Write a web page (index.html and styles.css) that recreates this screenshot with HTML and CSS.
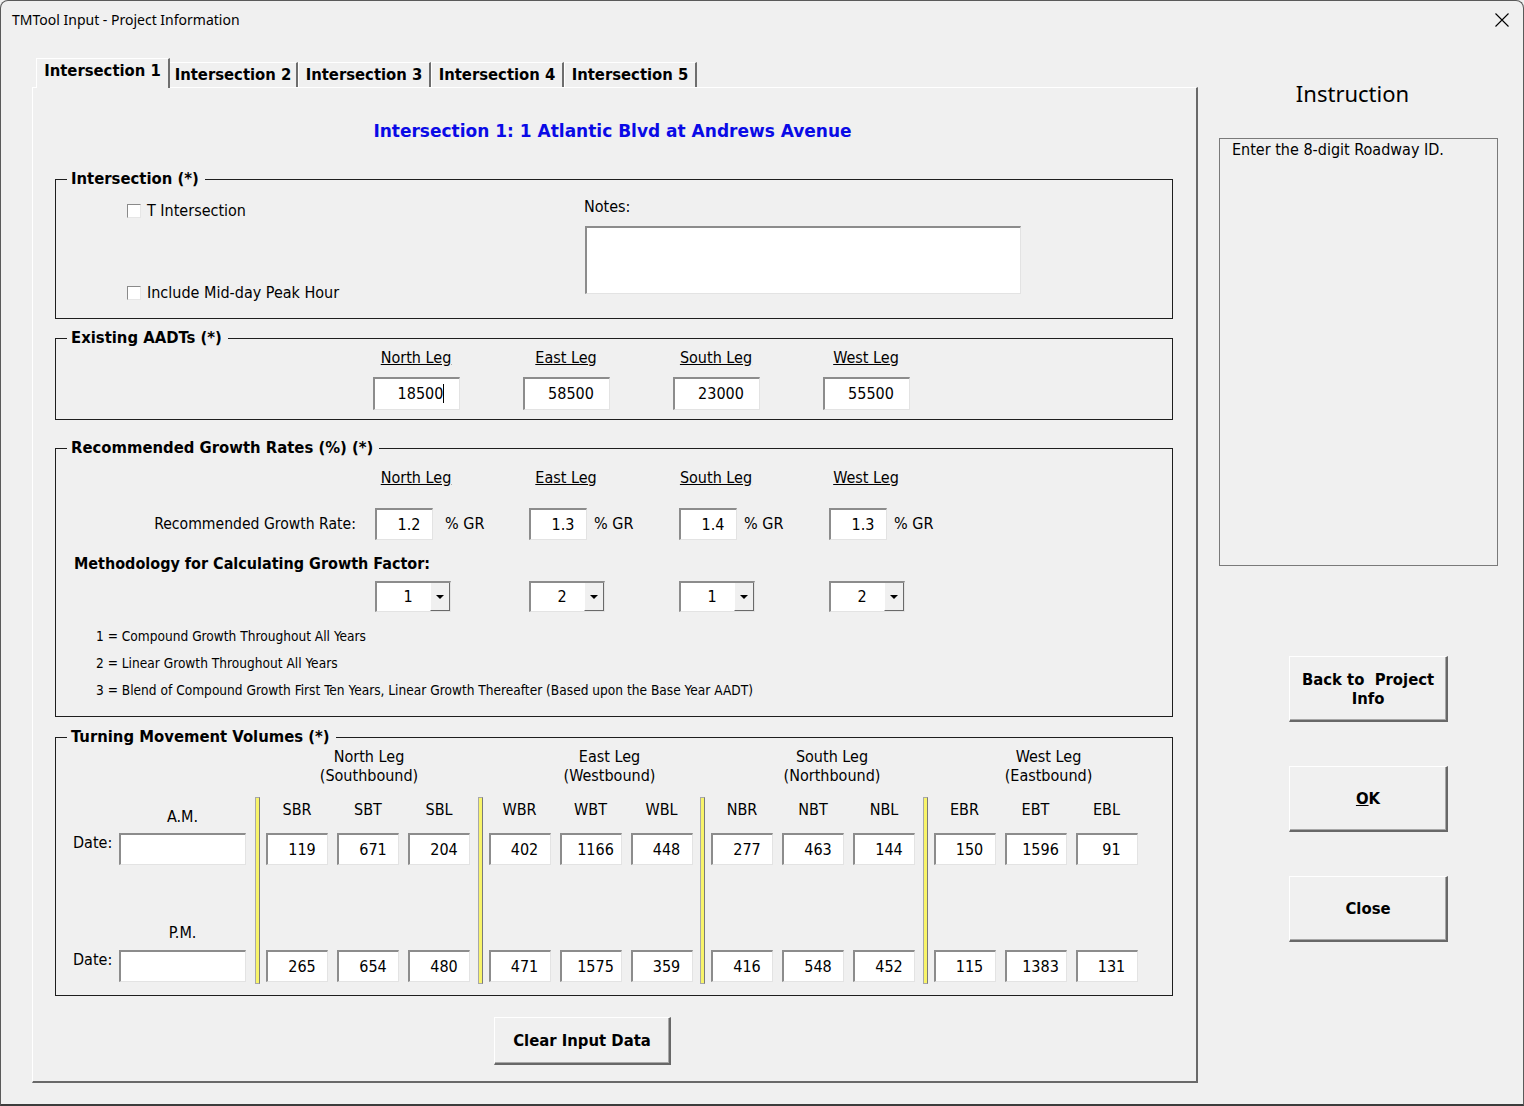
FILE: index.html
```html
<!DOCTYPE html>
<html>
<head>
<meta charset="utf-8">
<title>TMTool Input - Project Information</title>
<link rel="stylesheet" href="styles.css">
</head>
<body>
<div class="window">
  <div class="titlebar">
    <span class="title">TMTool Input - Project Information</span>
    <svg class="close" width="14" height="14" viewBox="0 0 14 14"><path d="M0.5 0.5L13.5 13.5M13.5 0.5L0.5 13.5" stroke="#000" stroke-width="1.1" fill="none"/></svg>
  </div>
  <div class="main">
    <div class="tabs-area">
      <div class="tabstrip">
        <div class="tab active">Intersection 1</div>
        <div class="tab t2">Intersection 2</div>
        <div class="tab">Intersection 3</div>
        <div class="tab">Intersection 4</div>
        <div class="tab">Intersection 5</div>
      </div>
      <div class="page">
        <h1 class="heading">Intersection 1: 1 Atlantic Blvd at Andrews Avenue</h1>

        <div class="group g1">
          <div class="gtitle">Intersection (*)</div>
          <div class="g1-body">
            <div class="checks">
              <div class="check"><span class="cb"></span><span>T Intersection</span></div>
              <div class="check"><span class="cb"></span><span>Include Mid-day Peak Hour</span></div>
            </div>
            <div class="notes">
              <div class="notes-label">Notes:</div>
              <div class="field notes-box"></div>
            </div>
          </div>
        </div>

        <div class="group g2">
          <div class="gtitle">Existing AADTs (*)</div>
          <div class="legs">
            <span class="leg-h">North Leg</span>
            <span class="leg-h">East Leg</span>
            <span class="leg-h">South Leg</span>
            <span class="leg-h">West Leg</span>
            <div class="field aadt">18500<span class="caret"></span></div>
            <div class="field aadt">58500</div>
            <div class="field aadt">23000</div>
            <div class="field aadt">55500</div>
          </div>
        </div>

        <div class="group g3">
          <div class="gtitle">Recommended Growth Rates (%) (*)</div>
          <div class="legs g3-head">
            <span class="leg-h">North Leg</span>
            <span class="leg-h">East Leg</span>
            <span class="leg-h">South Leg</span>
            <span class="leg-h">West Leg</span>
          </div>
          <div class="gr-row">
            <div class="gr-label">Recommended Growth Rate:</div>
            <div class="gr-cell first"><div class="field gr">1.2</div><span>% GR</span></div>
            <div class="gr-cell"><div class="field gr">1.3</div><span>% GR</span></div>
            <div class="gr-cell"><div class="field gr">1.4</div><span>% GR</span></div>
            <div class="gr-cell"><div class="field gr">1.3</div><span>% GR</span></div>
          </div>
          <div class="method">Methodology for Calculating Growth Factor:</div>
          <div class="combo-row">
            <div class="gr-cell first"><div class="field combo"><span class="cv">1</span><span class="cbtn"><span class="arrow"></span></span></div></div>
            <div class="gr-cell"><div class="field combo"><span class="cv">2</span><span class="cbtn"><span class="arrow"></span></span></div></div>
            <div class="gr-cell"><div class="field combo"><span class="cv">1</span><span class="cbtn"><span class="arrow"></span></span></div></div>
            <div class="gr-cell"><div class="field combo"><span class="cv">2</span><span class="cbtn"><span class="arrow"></span></span></div></div>
          </div>
          <div class="method-notes">
            <p>1 = Compound Growth Throughout All Years</p>
            <p>2 = Linear Growth Throughout All Years</p>
            <p>3 = Blend of Compound Growth First Ten Years, Linear Growth Thereafter (Based upon the Base Year AADT)</p>
          </div>
        </div>

        <div class="group g4">
          <div class="gtitle">Turning Movement Volumes (*)</div>
          <div class="tm">
            <div class="tm-left">
              <div class="period">A.M.</div>
              <div class="date-row"><span class="date-l">Date:</span><div class="field date"></div></div>
              <div class="period pm">P.M.</div>
              <div class="date-row pm-row"><span class="date-l">Date:</span><div class="field date"></div></div>
            </div>
            <div class="leg">
              <div class="leg-head">North Leg<br>(Southbound)</div>
              <div class="leg-body">
                <div class="bar"></div>
                <div class="cells">
                  <span class="mv">SBR</span><span class="mv">SBT</span><span class="mv">SBL</span>
                  <div class="field vol">119</div><div class="field vol">671</div><div class="field vol">204</div>
                  <div class="field vol pmv">265</div><div class="field vol pmv">654</div><div class="field vol pmv">480</div>
                </div>
              </div>
            </div>
            <div class="leg">
              <div class="leg-head">East Leg<br>(Westbound)</div>
              <div class="leg-body">
                <div class="bar"></div>
                <div class="cells">
                  <span class="mv">WBR</span><span class="mv">WBT</span><span class="mv">WBL</span>
                  <div class="field vol">402</div><div class="field vol">1166</div><div class="field vol">448</div>
                  <div class="field vol pmv">471</div><div class="field vol pmv">1575</div><div class="field vol pmv">359</div>
                </div>
              </div>
            </div>
            <div class="leg">
              <div class="leg-head">South Leg<br>(Northbound)</div>
              <div class="leg-body">
                <div class="bar"></div>
                <div class="cells">
                  <span class="mv">NBR</span><span class="mv">NBT</span><span class="mv">NBL</span>
                  <div class="field vol">277</div><div class="field vol">463</div><div class="field vol">144</div>
                  <div class="field vol pmv">416</div><div class="field vol pmv">548</div><div class="field vol pmv">452</div>
                </div>
              </div>
            </div>
            <div class="leg">
              <div class="leg-head">West Leg<br>(Eastbound)</div>
              <div class="leg-body">
                <div class="bar"></div>
                <div class="cells">
                  <span class="mv">EBR</span><span class="mv">EBT</span><span class="mv">EBL</span>
                  <div class="field vol">150</div><div class="field vol">1596</div><div class="field vol">91</div>
                  <div class="field vol pmv">115</div><div class="field vol pmv">1383</div><div class="field vol pmv">131</div>
                </div>
              </div>
            </div>
          </div>
        </div>

        <button class="btn btn-clear">Clear Input Data</button>
      </div>
    </div>

    <div class="side">
      <div class="instr-title">Instruction</div>
      <div class="instr-box">Enter the 8-digit Roadway ID.</div>
      <button class="btn side-btn first-btn">Back to&nbsp; Project<br>Info</button>
      <button class="btn side-btn"><span class="ul">O</span>K</button>
      <button class="btn side-btn">Close</button>
    </div>
  </div>
</div>
</body>
</html>
```
FILE: styles.css
```css
* { box-sizing: border-box; margin: 0; padding: 0; }
html, body { width: 1524px; height: 1106px; overflow: hidden; background: #f0f0f0; }
body {
  font-family: "DejaVu Sans Condensed", "DejaVu Sans", sans-serif;
  font-stretch: condensed;
  font-size: 16px;
  color: #000;
}
.window {
  width: 1524px; height: 1106px;
  background: #f0f0f0;
  border: 1px solid #5a5a5a;
  border-bottom: 2px solid #3c3c3c;
  border-radius: 8px 8px 0 0;
  display: flex; flex-direction: column;
  overflow: hidden;
}
.titlebar {
  height: 39px; flex: none;
  display: flex; align-items: center; justify-content: space-between;
  padding: 0 14px 0 11px;
}
.title {
  font-family: "Noto Sans", sans-serif; font-stretch: normal;
  font-size: 14px; line-height: 20px; margin-top: -1px;
}
.close { display: block; margin-top: -1px; }

.main { display: flex; flex: 1; }
.tabs-area { margin-left: 31px; width: 1166px; padding-top: 18px; flex: none; }
.tabstrip { display: flex; align-items: flex-end; height: 29px; padding-left: 4px; }
.tab {
  height: 25px; width: 133px;
  border-top: 1px solid #fff; border-left: 1px solid #fff; border-right: 2px solid #6e6e6e;
  font-weight: bold; font-size: 16.5px; line-height: 23px; text-align: center;
  background: #f0f0f0;
}
.tab.t2 { width: 128px; border-left: none; }
.tab.active {
  height: 30px; width: 134px; margin-bottom: -1px;
  line-height: 24px; position: relative; z-index: 1;
}
.page {
  height: 996px;
  border-top: 1px solid #fff; border-left: 1px solid #fff;
  border-right: 2px solid #696969; border-bottom: 2px solid #696969;
  padding-top: 31px;
}
.heading {
  font-family: "DejaVu Sans", sans-serif; font-stretch: normal;
  font-weight: bold; font-size: 17px; line-height: 24px;
  color: #0a0ae6; text-align: center; padding-right: 4px;
}

.group { width: 1118px; margin-left: 22px; border: 1px solid #1e1e1e; }
.gtitle {
  display: table; margin: -11px 0 0 11px; padding: 0 6px 0 4px;
  background: #f0f0f0; font-weight: bold; font-size: 16.5px; line-height: 20px;
}
.field {
  background: #fff;
  border-style: solid; border-width: 2px 1px 1px 2px;
  border-color: #8c8c8c #e3e3e3 #e3e3e3 #8c8c8c;
}

/* group 1 */
.g1 { height: 140px; margin-top: 36px; }
.g1-body { display: flex; }
.checks { margin: 12px 0 0 71px; width: 457px; height: 102px; display: flex; flex-direction: column; justify-content: space-between; }
.check { display: flex; align-items: center; gap: 6px; height: 20px; line-height: 20px; }
.cb { width: 14px; height: 14px; background: #fff; border: 1px solid; border-color: #8a8a8a #e6e6e6 #e6e6e6 #8a8a8a; }
.notes { margin-top: 8px; }
.notes-label { line-height: 20px; }
.notes-box { width: 436px; height: 68px; margin: 9px 0 0 1px; }

/* group 2 */
.g2 { height: 82px; margin-top: 19px; }
.legs { display: grid; grid-template-columns: repeat(4, 150px); margin-left: 285px; }
.leg-h { text-align: center; text-decoration: underline; line-height: 20px; }
.aadt { width: 87px; height: 33px; justify-self: center; margin-top: 9px; text-align: center; line-height: 30px; padding-left: 9px; }
.caret { display: inline-block; width: 1px; height: 19px; background: #000; vertical-align: -4px; }

/* group 3 */
.g3 { height: 269px; margin-top: 28px; }
.g3-head { margin-top: 10px; }
.gr-row { display: grid; grid-template-columns: 285px repeat(4, 150px); margin-top: 20px; align-items: center; }
.gr-label { justify-self: end; margin-right: -15px; line-height: 20px; font-size: 15.6px; }
.gr-cell { display: flex; align-items: center; gap: 7px; padding-left: 38px; line-height: 20px; }
.gr-cell.first { padding-left: 34px; gap: 12px; }
.gr { width: 58px; height: 32px; text-align: center; line-height: 29px; padding-left: 9px; }
.method { margin: 14px 0 0 18px; font-weight: bold; font-size: 16px; line-height: 20px; }
.combo-row { display: grid; grid-template-columns: repeat(4, 150px); margin: 7px 0 0 285px; }
.combo { width: 76px; height: 31px; display: flex; }
.cv { flex: 1; text-align: center; line-height: 28px; padding-left: 9px; }
.cbtn {
  width: 20px; background: #f0f0f0;
  border-left: 1px solid #fff; border-right: 1px solid #6a6a6a; border-bottom: 1px solid #6a6a6a;
  display: flex; align-items: center; justify-content: center;
}
.arrow { width: 0; height: 0; border-left: 4px solid transparent; border-right: 4px solid transparent; border-top: 4px solid #000; }
.method-notes { margin: 11px 0 0 40px; font-size: 13.6px; }
.method-notes p { line-height: 27px; }

/* group 4 */
.g4 { height: 259px; margin-top: 20px; }
.tm { display: flex; }
.tm-left { width: 199px; padding-left: 17px; flex: none; }
.period { margin: 60px 0 0 46px; width: 127px; text-align: center; line-height: 20px; }
.period.pm { margin-top: 58px; }
.date-row { display: flex; margin-top: 6px; }
.date-row.pm-row { margin-top: 7px; }
.date-l { width: 46px; line-height: 20px; }
.date { width: 127px; height: 32px; }
.leg { width: 222.5px; flex: none; }
.leg-head { width: 206px; margin-left: 11px; height: 38px; line-height: 19px; text-align: center; }
.leg:nth-child(3) .leg-head, .leg:nth-child(4) .leg-head { margin-left: 29px; }
.leg:nth-child(5) .leg-head { margin-left: 23px; }
.leg-body { display: flex; margin-top: 12px; }
.bar {
  width: 5px; height: 187px;
  background: #f8f46a;
  border-left: 1px solid #a8a8a8; border-right: 1px solid #7a7a7a;
  border-top: 1px solid #a8a8a8; border-bottom: 1px solid #a8a8a8;
}
.cells { margin-left: 6px; display: grid; grid-template-columns: repeat(3, 62px); column-gap: 9px; align-content: start; padding-top: 3px; }
.mv { text-align: center; line-height: 20px; }
.vol { height: 32px; margin-top: 13px; text-align: center; line-height: 29px; padding-left: 9px; }
.vol.pmv { margin-top: 85px; }

/* buttons */
.btn {
  display: block;
  background: #f0f0f0; color: #000;
  border-style: solid; border-width: 1px 2px 2px 1px;
  border-color: #fff #686868 #686868 #fff;
  box-shadow: inset -1px -1px 0 #a8a8a8;
  font-family: "DejaVu Sans Condensed", "DejaVu Sans", sans-serif; font-stretch: condensed;
  font-weight: bold; font-size: 16.5px; line-height: 19px;
}
.btn-clear { width: 177px; height: 48px; margin: 21px 0 0 461px; }

/* side */
.side { width: 325px; flex: none; }
.instr-title {
  margin: 38px 0 0 21px; width: 279px; padding-right: 12px; text-align: center;
  font-family: "Noto Sans", sans-serif; font-stretch: normal; font-size: 22px; line-height: 30px;
}
.instr-box { margin: 30px 0 0 21px; width: 279px; height: 428px; border: 1px solid #7a7a7a; padding: 1px 12px; line-height: 20px; }
.side-btn { width: 159px; height: 66px; margin: 44px 0 0 91px; }
.side-btn.first-btn { margin-top: 90px; }
.ul { text-decoration: underline; }
```
